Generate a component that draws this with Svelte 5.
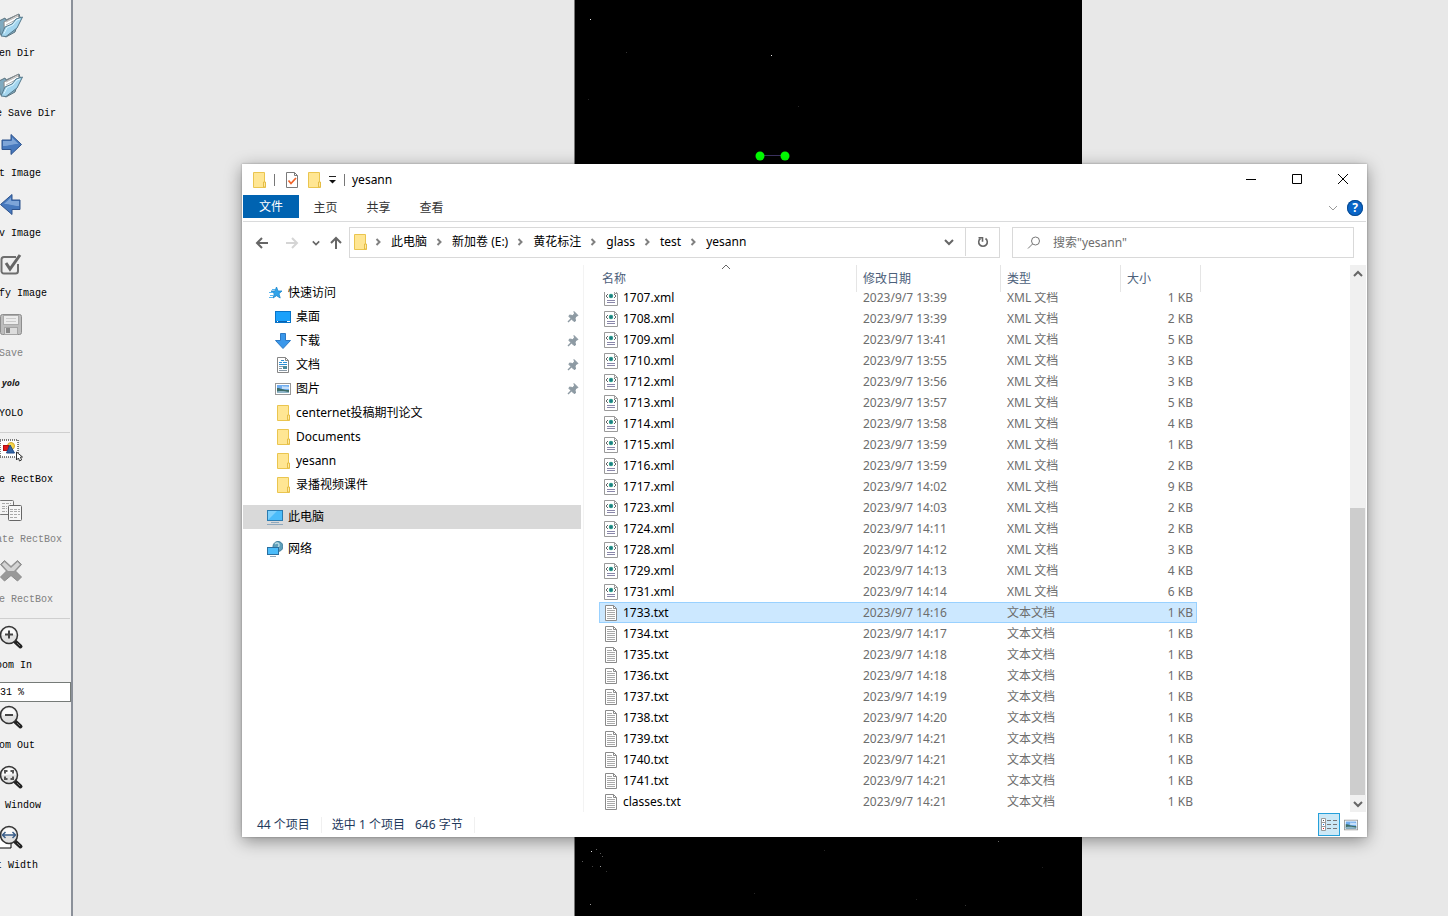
<script>
  const groups = [
    [
      { icon: 'dir', label: 'Open Dir' },
      { icon: 'dir', label: 'Change Save Dir' },
      { icon: 'next', label: 'Next Image' },
      { icon: 'prev', label: 'Prev Image' },
      { icon: 'verify', label: 'Verify Image' },
      { icon: 'save', label: 'Save', disabled: true },
      { icon: 'yolo', label: 'YOLO' }
    ],
    [
      { icon: 'rect', label: 'Create RectBox' },
      { icon: 'copy', label: 'Duplicate RectBox', disabled: true },
      { icon: 'delete', label: 'Delete RectBox', disabled: true }
    ]
  ];
  const zoomIn = { icon: 'zoomin', label: 'Zoom In' };
  const zoomRest = [
    { icon: 'zoomout', label: 'Zoom Out' },
    { icon: 'fitwin', label: 'Fit Window' },
    { icon: 'fitwidth', label: 'Fit Width' }
  ];

  const specks = [
    [15, 19, 0.9], [196, 55, 0.9], [51, 52, 0.2], [13, 99, 0.15], [223, 106, 0.15],
    [16, 851, 0.9], [21, 849, 0.4], [25, 853, 0.35], [27, 856, 0.35], [7, 861, 0.35],
    [25, 866, 0.6], [17, 866, 0.25], [31, 871, 0.2], [15, 904, 0.6], [423, 841, 0.5],
    [249, 850, 0.15], [341, 899, 0.15], [179, 893, 0.15], [390, 905, 0.2], [467, 867, 0.12]
  ];

  const quick = [
    { icon: 'desktop', label: '桌面', pin: true },
    { icon: 'download', label: '下载', pin: true },
    { icon: 'doc', label: '文档', pin: true },
    { icon: 'picture', label: '图片', pin: true },
    { icon: 'folder', label: 'centernet投稿期刊论文' },
    { icon: 'folder', label: 'Documents' },
    { icon: 'folder', label: 'yesann' },
    { icon: 'folder', label: '录播视频课件' }
  ];

  const crumbs = ['此电脑', '新加卷 (E:)', '黄花标注', 'glass', 'test', 'yesann'];

  const files = [
    ['1707.xml', '13:39', 1], ['1708.xml', '13:39', 2], ['1709.xml', '13:41', 5],
    ['1710.xml', '13:55', 3], ['1712.xml', '13:56', 3], ['1713.xml', '13:57', 5],
    ['1714.xml', '13:58', 4], ['1715.xml', '13:59', 1], ['1716.xml', '13:59', 2],
    ['1717.xml', '14:02', 9], ['1723.xml', '14:03', 2], ['1724.xml', '14:11', 2],
    ['1728.xml', '14:12', 3], ['1729.xml', '14:13', 4], ['1731.xml', '14:14', 6],
    ['1733.txt', '14:16', 1], ['1734.txt', '14:17', 1], ['1735.txt', '14:18', 1],
    ['1736.txt', '14:18', 1], ['1737.txt', '14:19', 1], ['1738.txt', '14:20', 1],
    ['1739.txt', '14:21', 1], ['1740.txt', '14:21', 1], ['1741.txt', '14:21', 1],
    ['classes.txt', '14:21', 1]
  ];
  let selected = $state('1733.txt');
  let zoom = $state('31 %');
</script>

{#snippet lens()}
  <path d="M15.5 16l6 5.5" stroke="#222" stroke-width="4" stroke-linecap="round" />
  <path d="M18 18l3 3" stroke="#777" stroke-width="1" />
  <circle cx="10" cy="10" r="8.5" fill="#e2e2e2" stroke="#333" stroke-width="1.5" />
  <path d="M3 10a7 7 0 0 1 14 0c-5-2-9 1-14 0z" fill="#fafafa" />
{/snippet}

{#snippet toolIcon(name)}
  <svg class="tool-icon" viewBox="0 0 24 24" fill="none" aria-hidden="true">
    {#if name === 'dir'}
      <path d="M0 8l6-3 1 2 13-6 1 3-5 15-9 5-6-3z" fill="#7fa9bf" stroke="#5d7480" />
      <path d="M5 9l14-7.500 1.500 4.500-9 13-6 3z" fill="#fff" stroke="#8a8a8a" />
      <path d="M7 9l12-6M7 12l13-7" stroke="#b5b5b5" />
      <path d="M2 23l4-9 7-3 4-5 6.500-2-5.500 11-11 8.500z" fill="#a4d6ef" stroke="#56798b" />
      <path d="M5 20.500l3-6 6-2.500 4-5 3-1" stroke="#dcf3fc" />
    {:else if name === 'next'}
      <path d="M3 7h9V1.500l10.500 10L12 21.500v-5H3z" fill="#4779be" stroke="#2d528c" />
      <path d="M4 8h9V4.500l6.500 6.500c-7 0-9 2-15.500 2z" fill="#7ea5d8" />
    {:else if name === 'prev'}
      <path d="M21 7h-8V1.500L1.500 11.500l11.500 10v-5h8z" fill="#4779be" stroke="#2d528c" />
      <path d="M20 8h-8V4.500L5 11c7 0 9 2 15 2z" fill="#7ea5d8" />
    {:else if name === 'verify'}
      <path d="M17 4H5a2.500 2.500 0 0 0-2.500 2.500v11A2.500 2.500 0 0 0 5 20.500h11.500a2.500 2.500 0 0 0 2.500-2.500v-7" stroke="#6e6e6e" stroke-width="2" />
      <path d="M7 10l4 6L21 2" stroke="#666" stroke-width="3" />
    {:else if name === 'save'}
      <rect x="1.500" y="1.500" width="21" height="20" rx="2" fill="#bdbdbd" stroke="#8e8e8e" />
      <rect x="4.500" y="2.500" width="15" height="9" fill="#ececec" stroke="#aaa" />
      <path d="M7 5.500h10M7 8.500h10" stroke="#ccc" />
      <rect x="5.500" y="14.500" width="13" height="7" fill="#ddd" stroke="#a5a5a5" />
      <rect x="7" y="15" width="4" height="5" fill="#888" />
    {:else if name === 'yolo'}
      <text x="3" y="13" font-family="Open Sans, sans-serif" font-size="9" font-weight="700" font-style="italic" fill="#222">yolo</text>
    {:else if name === 'rect'}
      <rect x="1" y="1" width="18" height="17" fill="#fff" />
      <circle cx="12" cy="7" r="3.500" fill="#f7d74c" stroke="#d5a92c" />
      <rect x="4.500" y="6.500" width="5" height="5" fill="#e01b1b" stroke="#b01010" />
      <path d="M11 6l4.500 8h-8z" fill="#3465a4" stroke="#204a87" />
      <rect x="1" y="1" width="18" height="17" stroke="#000" stroke-dasharray="1 1" />
      <path d="M17.500 13v8l2-2 1 3 2-1-1-3h2z" fill="#fff" stroke="#333" />
    {:else if name === 'copy'}
      <rect x=".5" y="1.500" width="14" height="14" rx="1" fill="#f4f4f4" stroke="#747474" />
      <path d="M3 4.500h9M3 7.500h5M3 9.500h5M3 12.500h5" stroke="#aaa" stroke-dasharray="3 1" />
      <rect x="9.500" y="6.500" width="13" height="15" rx="1" fill="#f7f7f7" stroke="#666" />
      <path d="M11 10.500h10M11 12.500h10M11 15.500h10M11 18.500h7" stroke="#aaa" stroke-dasharray="3 1" />
    {:else if name === 'delete'}
      <path d="M1.500 5.500l4-4 6.500 6 6.500-6 4 4-6 6.500 6 6-4 4-6.500-5.500-6.500 5.500-4-4 6-6z" fill="#999" stroke="#8b8b8b" />
      <path d="M3 5.500l2.500-2.500 6.500 6 6.500-6L21 5.500 15 12H9z" fill="#d4d4d4" />
    {:else if name === 'zoomin'}
      {@render lens()}
      <path d="M6 9.500h8M10 5.500v8" stroke="#444" stroke-width="2" />
    {:else if name === 'zoomout'}
      {@render lens()}
      <path d="M6 10h8" stroke="#444" stroke-width="2" />
    {:else if name === 'fitwin'}
      {@render lens()}
      <path d="M6 8.500V6h2.500M11.500 6H14v2.500M14 11.500V14h-2.500M8.500 14H6v-2.500" stroke="#555" stroke-width="2" />
    {:else}
      <path d="M-2 12h14v11H-2z" fill="#fff" stroke="#000" />
      {@render lens()}
      <path d="M4 10h12M6.500 7l-3 3 3 3M13.500 7l3 3-3 3" stroke="#3b5f8a" stroke-width="1.500" />
    {/if}
  </svg>
{/snippet}

{#snippet tool(t)}
  <button class="tool" disabled={t.disabled}>
    {@render toolIcon(t.icon)}
    <span>{t.label}</span>
  </button>
{/snippet}

{#snippet icon(name)}
  <svg class="icon {name}" viewBox="0 0 16 16" fill="none" aria-hidden="true">
    {#if name === 'folder'}
      <path d="M2.500.500h11v10h1v5h-12z" fill="#ffe693" stroke="#eac54f" />
      <path d="M12.500 15v-5h2v5z" fill="#ffe9a2" stroke="#e5bd45" />
    {:else if name === 'star'}
      <path d="M9.500 2l1.500 4h4l-3 2.700 1.200 4.300-3.700-2.300L6 13l1.300-4.300L4 6h4z" fill="#2fa3ea" stroke="#1c86cd" stroke-width=".8" />
      <path d="M5 4.500h3M2 7.500h4M3 10.500h3M2 12.500h4" stroke="#59b6ee" />
    {:else if name === 'desktop'}
      <rect x=".5" y="2.500" width="15" height="11" fill="#1ba1fb" stroke="#0874c9" />
      <path d="M1 12.500h14" stroke="#0a62b0" />
      <path d="M2 12.500h1M12 12.500h3" stroke="#fff" />
    {:else if name === 'download'}
      <path d="M5.500.500h5v7h5L8 15.500.500 7.500h5z" fill="#3a97ea" stroke="#2c79c4" />
    {:else if name === 'doc'}
      <path d="M2.500.500h8l3 3v12h-11z" fill="#fff" stroke="#868686" />
      <path d="M10.500.500v3h3" stroke="#868686" />
      <path d="M6 3.500h3M4 5.500h3M8 5.500h4M4 7.500h8" stroke="#2d90d4" />
      <path d="M4 9.500h4M4 11.500h3M4 13.500h8" stroke="#8a9aa8" />
      <path d="M8 9h4v3H8z" fill="#4c8a9b" />
    {:else if name === 'picture'}
      <rect x=".5" y="2.500" width="15" height="11" fill="#fff" stroke="#989898" />
      <path d="M2 4h12v8H2z" fill="#72aef0" />
      <path d="M7 5c2 1 4 0 7 1v2H7z" fill="#c5dffa" />
      <path d="M2 7c4 0 5 2 12 2v3H2z" fill="#3e6d68" />
      <path d="M2 10.500c5-1 8 0 12 .5v1H2z" fill="#8fb6c9" />
    {:else if name === 'pc'}
      <rect x=".5" y="1.500" width="15" height="10" fill="#4bbcfa" stroke="#2b7bb0" />
      <path d="M1 11V2h9z" fill="#7dd0fc" />
      <path d="M4 13.500h8M0 15.500h16" stroke="#8fa8bd" />
    {:else if name === 'network'}
      <circle cx="11" cy="5.500" r="5" fill="#5e9fba" stroke="#3e7d9c" />
      <path d="M8 3c2-2 4-1 4 1s-2 2 0 4" stroke="#b7d9e3" stroke-width="1.500" />
      <rect x=".5" y="6.500" width="11" height="7" fill="#4bbcfa" stroke="#2b6f9f" />
      <path d="M3 15.500h6" stroke="#8fa8bd" />
    {:else if name === 'xml'}
      <path d="M1.500.500h10l3 3v12h-13z" fill="#fff" stroke="#9a9a9a" />
      <path d="M11.500.500v3h3" stroke="#9a9a9a" />
      <path d="M5 4L3 6l2 2M11 4l2 2-2 2" stroke="#666" />
      <circle cx="8" cy="6" r="2.200" fill="#2f9d8c" />
      <circle cx="8" cy="6" r="1" fill="#1d6f86" />
      <path d="M4 10.500h8M4 12.500h8" stroke="#8a87aa" />
    {:else if name === 'txt'}
      <path d="M2.500.500h8l3 3v12h-11z" fill="#fff" stroke="#8a8a8a" />
      <path d="M10.500.500v3h3" stroke="#8a8a8a" />
      <path d="M4 3.500h5M4 5.500h8M4 7.500h8M4 9.500h8M4 11.500h8M4 13.500h8" stroke="#a9a9a9" />
    {:else if name === 'check'}
      <path d="M2.500.500h8l3 3v12h-11z" fill="#fff" stroke="#7a7a7a" />
      <path d="M10.500.500v3h3" stroke="#7a7a7a" />
      <path d="M4.500 8.500l2.500 3 5-5.500" stroke="#f0642a" stroke-width="1.800" />
    {:else if name === 'pin'}
      <path d="M9 2.500L13 6.500 11.500 7l-1.500 2 .5 3-1.500.500L4 7.500l.500-1.500 3 .5 2-1.500z" fill="#8d9aa3" stroke="#8d9aa3" />
      <path d="M6.500 9.500L3 13" stroke="#8d9aa3" stroke-width="1.500" />
    {/if}
  </svg>
{/snippet}

{#snippet chevron(dir, cls)}
  <svg class="chev {cls}" viewBox="0 0 10 10" fill="none" aria-hidden="true">
    {#if dir === 'down'}
      <path d="M1 3l4 4 4-4" stroke="currentColor" />
    {:else if dir === 'up'}
      <path d="M1 7l4-4 4 4" stroke="currentColor" />
    {:else}
      <path d="M3.500 2l3 3-3 3" stroke="currentColor" />
    {/if}
  </svg>
{/snippet}

<div class="app">
  <aside class="toolbar">
    {#each groups as group}
      {#each group as t}
        {@render tool(t)}
      {/each}
      <hr />
    {/each}
    {@render tool(zoomIn)}
    <input class="zoom" aria-label="Zoom" bind:value={zoom} />
    {#each zoomRest as t}
      {@render tool(t)}
    {/each}
  </aside>

  <main class="canvas">
    <div class="photo">
      {#each specks as [x, y, o]}
        <i style="left:{x}px;top:{y}px;opacity:{o}"></i>
      {/each}
      <svg class="shape" viewBox="0 0 36 12" aria-hidden="true">
        <path d="M6 5.500h25" stroke="#3c3360" />
        <circle cx="6" cy="6" r="4.500" fill="#0f0" />
        <circle cx="31" cy="6" r="4.500" fill="#0f0" />
      </svg>
    </div>
  </main>

  <section class="window" aria-label="yesann">
    <header class="title">
      {@render icon('folder')}
      <span class="bar first"></span>
      <button aria-label="属性">{@render icon('check')}</button>
      <button aria-label="新建文件夹">{@render icon('folder')}</button>
      <button class="more" aria-label="自定义">
        <svg viewBox="0 0 8 8"><path d="M1 .500h7" stroke="#222" /><path d="M1 4h7L4.500 7.500z" fill="#111" /></svg>
      </button>
      <span class="bar"></span>
      <h1>yesann</h1>
      <div class="controls">
        <button aria-label="最小化"><svg viewBox="0 0 10 10"><path d="M0 5.500h10" stroke="#000" /></svg></button>
        <button aria-label="最大化"><svg viewBox="0 0 10 10"><path d="M.500.500h9v9h-9z" stroke="#000" fill="none" /></svg></button>
        <button aria-label="关闭"><svg viewBox="0 0 10 10"><path d="M0 0l10 10M10 0L0 10" stroke="#000" /></svg></button>
      </div>
    </header>

    <nav class="tabs">
      <button class="file">文件</button>
      <button>主页</button>
      <button>共享</button>
      <button>查看</button>
      <div class="help">
        <button aria-label="展开功能区">{@render chevron('down', 'pale')}</button>
        <button class="round" aria-label="帮助">?</button>
      </div>
    </nav>

    <div class="nav-row">
      <button aria-label="后退"><svg class="arrow" viewBox="0 0 14 14"><path d="M13 7H2M7 2L2 7l5 5" /></svg></button>
      <button aria-label="前进" disabled><svg class="arrow" viewBox="0 0 14 14"><path d="M1 7h11M7 2l5 5-5 5" /></svg></button>
      <button class="small" aria-label="历史">{@render chevron('down', 'tiny')}</button>
      <button class="up" aria-label="上移"><svg class="arrow" viewBox="0 0 14 14"><path d="M7 13V2M2 7l5-5 5 5" /></svg></button>
      <div class="address">
        {@render icon('folder')}
        {#each crumbs as c}
          {@render chevron('right', 'sep')}
          <a href="#{c}">{c}</a>
        {/each}
        <button class="drop" aria-label="展开">{@render chevron('down', 'thick')}</button>
        <button class="refresh" aria-label="刷新">
          <svg viewBox="0 0 12 12" fill="none"><path d="M8.500 2.500A4.300 4.300 0 1 1 3.500 2.500" stroke="#666" stroke-width="1.600" /><path d="M1.500 1.800h4v4" stroke="#666" stroke-width="1.600" /></svg>
        </button>
      </div>
      <label class="search">
        <svg viewBox="0 0 14 14" fill="none" aria-hidden="true"><circle cx="8.500" cy="5" r="4" stroke="#777" /><path d="M5.500 8L1 12.500" stroke="#777" /></svg>
        <input aria-label="搜索" placeholder={'搜索"yesann"'} />
      </label>
    </div>

    <div class="body">
      <nav class="tree">
        <a href="#quick" class="root">{@render icon('star')}<span>快速访问</span></a>
        {#each quick as q}
          <a href="#{q.label}">{@render icon(q.icon)}<span>{q.label}</span>{#if q.pin}{@render icon('pin')}{/if}</a>
        {/each}
        <a href="#pc" class="root top current">{@render icon('pc')}<span>此电脑</span></a>
        <a href="#network" class="root top">{@render icon('network')}<span>网络</span></a>
      </nav>

      <div class="list">
        <span class="sort">{@render chevron('up', 'flat')}</span>
        <table>
          <colgroup><col class="c-name" /><col class="c-date" /><col class="c-type" /><col class="c-size" /></colgroup>
          <thead>
            <tr>
              <th><div>名称</div></th>
              <th><div>修改日期</div></th>
              <th><div>类型</div></th>
              <th><div class="last">大小</div></th>
            </tr>
          </thead>
          <tbody>
            {#each files as [name, time, size]}
              <tr class:selected={selected === name} onclick={() => (selected = name)}>
                <td><div class="name">{@render icon(name.endsWith('xml') ? 'xml' : 'txt')}{name}</div></td>
                <td>2023/9/7 {time}</td>
                <td>{name.endsWith('xml') ? 'XML 文档' : '文本文档'}</td>
                <td class="num">{size} KB</td>
              </tr>
            {/each}
          </tbody>
        </table>
      </div>

      <div class="scroll">
        <button aria-label="向上滚动">{@render chevron('up', 'thick')}</button>
        <div class="track"><div class="thumb"></div></div>
        <button aria-label="向下滚动">{@render chevron('down', 'thick')}</button>
      </div>
    </div>

    <footer class="status">
      <span class="cell">44 个项目</span>
      <span class="cell wide"><span>选中 1 个项目</span><span>646 字节</span></span>
      <div class="views">
        <button class="on" aria-label="详细信息">
          <svg viewBox="0 0 16 14" fill="none">
            <path d="M.500.500h4v12h-4zM.500 4.500h4M.500 8.500h4" fill="#fff" stroke="#999" />
            <path d="M2 2.500h1" stroke="#555" /><path d="M2 6.500h1" stroke="#1a7be0" /><path d="M2 10.500h1" stroke="#e02020" />
            <path d="M6 2.500h4M12 2.500h4M6 6.500h4M12 6.500h4M6 10.500h4M12 10.500h4" stroke="#777" />
          </svg>
        </button>
        <button aria-label="大缩略图">{@render icon('picture')}</button>
      </div>
    </footer>
  </section>
</div>

<style>
  :global(body) {
    margin: 0;
    background: #e8e8e8;
  }
  .app {
    position: relative;
    display: flex;
    height: 100vh;
    overflow: hidden;
    font: 12px/16px "Noto Sans", "Noto Sans CJK SC", sans-serif;
    color: #000;
  }
  button,
  input {
    font: inherit;
    color: inherit;
    border: 0;
    padding: 0;
    background: none;
  }
  button {
    display: flex;
    align-items: center;
    justify-content: center;
  }
  a {
    color: inherit;
    text-decoration: none;
  }
  svg {
    display: block;
    flex: none;
  }

  .toolbar {
    box-sizing: border-box;
    flex: none;
    display: flex;
    flex-direction: column;
    width: 122px;
    margin-left: -49px;
    padding-top: 3px;
    background: #f0f0f0;
    border-right: 2px solid #8b9099;
    font: 10px/14px "Liberation Mono", monospace;
  }
  .tool {
    flex: none;
    flex-direction: column;
    justify-content: flex-start;
    gap: 10px;
    height: 60px;
    padding-top: 10px;
    white-space: nowrap;
  }
  .tool:disabled {
    color: #808080;
  }
  .tool-icon {
    width: 24px;
    height: 24px;
    overflow: visible;
  }
  hr {
    flex: none;
    width: 119px;
    height: 1px;
    margin: 9px 0 -4px;
    border: 0;
    background: #cfcfcf;
  }
  .zoom {
    box-sizing: border-box;
    height: 20px;
    margin: 7px 0 -7px;
    padding-left: 48px;
    background: #fff;
    border: 1px solid #767b78;
  }

  .canvas {
    position: relative;
    flex: 1;
    background: #e8e8e8;
  }
  .photo {
    position: absolute;
    left: 501px;
    top: 0;
    bottom: 0;
    width: 507px;
    background: #000;
    border-left: 1px solid #777;
  }
  .photo i {
    position: absolute;
    width: 1px;
    height: 1px;
    background: #fff;
  }
  .shape {
    position: absolute;
    left: 179px;
    top: 150px;
    width: 36px;
    height: 12px;
  }

  .window {
    position: absolute;
    left: 242px;
    right: 81px;
    top: 164px;
    background: #fff;
    box-shadow: 0 4px 16px rgba(0, 0, 0, 0.4), 0 0 2px rgba(0, 0, 0, 0.3);
  }
  .icon {
    width: 16px;
    height: 16px;
  }
  .chev {
    width: 10px;
    height: 10px;
    color: #666;
  }
  .pale {
    color: #999;
  }
  .tiny {
    width: 8px;
    height: 8px;
  }
  .tiny path,
  .thick path,
  .sep path {
    stroke-width: 2;
  }
  .sep {
    color: #808080;
  }

  .title {
    display: flex;
    align-items: center;
    height: 31px;
    padding-left: 9px;
  }
  .bar {
    width: 1px;
    height: 12px;
    background: #777;
    margin: 0 7px 0 8px;
  }
  .bar.first {
    margin: 0 9px 0 7px;
  }
  .title > button + button {
    margin-left: 6px;
  }
  .more svg {
    width: 8px;
    height: 8px;
  }
  h1 {
    margin: 0;
    font: inherit;
  }
  .controls {
    display: flex;
    margin-left: auto;
    padding-right: 1px;
    align-self: stretch;
  }
  .controls button {
    width: 46px;
    height: 30px;
  }
  .controls svg {
    width: 10px;
    height: 10px;
    overflow: visible;
  }

  .tabs {
    display: flex;
    height: 26px;
    margin: 0 1px;
    border-bottom: 1px solid #dadbdc;
    color: #333;
  }
  .tabs > button {
    width: 53px;
    height: 26px;
  }
  .tabs > .file {
    width: 56px;
    height: 23px;
    background: #0063b1;
    color: #fff;
  }
  .help {
    display: flex;
    align-items: center;
    gap: 9px;
    margin-left: auto;
    padding-right: 3px;
  }
  .help .round {
    width: 16px;
    height: 16px;
    border-radius: 50%;
    background: #0a66c8;
    box-shadow: inset 0 0 0 1px #0b4a8f;
    color: #fff;
    font-weight: 700;
  }

  .nav-row {
    display: flex;
    align-items: center;
    height: 31px;
    padding: 5px 13px 7px;
  }
  .nav-row > button {
    width: 14px;
    margin-right: 16px;
  }
  .nav-row > button.small {
    width: 8px;
    margin: 0 9px 0 -3px;
  }
  .nav-row > button.up {
    margin-right: 6px;
  }
  .arrow {
    width: 14px;
    height: 14px;
    fill: none;
    stroke: #666;
    stroke-width: 2;
  }
  button:disabled .arrow {
    stroke: #d5d5d5;
  }
  .address {
    box-sizing: border-box;
    flex: 1;
    display: flex;
    align-items: center;
    height: 31px;
    padding: 0 0 1px 2px;
    border: 1px solid #d9d9d9;
    white-space: nowrap;
  }
  .address .folder {
    margin-right: -2px;
  }
  .address .sep {
    margin: 0 8px 0 7px;
  }
  .drop {
    align-self: stretch;
    width: 32px;
    margin-left: auto;
  }
  .refresh {
    align-self: stretch;
    width: 34px;
    border-left: 1px solid #d9d9d9;
  }
  .refresh svg {
    width: 12px;
    height: 12px;
  }
  .search {
    box-sizing: border-box;
    flex: 0 1 342px;
    display: flex;
    align-items: center;
    gap: 12px;
    height: 31px;
    margin-left: 12px;
    padding-left: 14px;
    border: 1px solid #d9d9d9;
  }
  .search svg {
    width: 14px;
    height: 14px;
  }
  .search input {
    flex: 1;
    min-width: 0;
  }
  .search input::placeholder {
    color: #6d6d6d;
  }

  .body {
    display: flex;
    padding-right: 1px;
  }
  .tree {
    box-sizing: border-box;
    flex: none;
    width: 342px;
    padding: 16px 2px 0 1px;
    border-right: 1px solid #f3f3f3;
  }
  .tree a {
    display: flex;
    align-items: center;
    gap: 5px;
    height: 24px;
    padding: 0 0 0 32px;
  }
  .tree a.root {
    padding-left: 24px;
  }
  .tree a.top {
    margin-top: 8px;
  }
  .tree a span {
    flex: 1;
  }
  .tree .current {
    background: #d9d9d9;
  }

  .list {
    position: relative;
    flex: 1;
    padding-left: 15px;
  }
  .sort {
    position: absolute;
    left: 137px;
    top: -3px;
    z-index: 2;
  }
  table {
    width: 598px;
    table-layout: fixed;
    border-collapse: collapse;
  }
  .c-name {
    width: 258px;
  }
  .c-date {
    width: 144px;
  }
  .c-type {
    width: 120px;
  }
  .c-size {
    width: 76px;
  }
  th {
    height: 22px;
    padding: 0;
    font-weight: 400;
    text-align: left;
    color: #4c607a;
  }
  th div {
    position: relative;
    z-index: 1;
    box-sizing: border-box;
    height: 27px;
    margin-bottom: -5px;
    padding: 6px 0 0 6px;
    background: #fff;
    border-right: 1px solid #e5e5e5;
  }
  th:first-child div {
    padding-left: 3px;
  }
  th .last {
    margin-right: -4px;
  }
  td {
    height: 21px;
    padding: 0 0 0 6px;
    line-height: 20px;
    color: #6d6d6d;
    white-space: nowrap;
  }
  td:first-child {
    padding-left: 4px;
    color: #000;
  }
  .name {
    display: flex;
    align-items: center;
    gap: 4px;
  }
  td.num {
    padding-right: 4px;
    text-align: right;
  }
  .selected {
    background: #cce8ff;
    outline: 1px solid #99d1ff;
    outline-offset: -1px;
  }

  .scroll {
    flex: none;
    display: flex;
    flex-direction: column;
    width: 16px;
    background: #f0f0f0;
  }
  .scroll button {
    height: 17px;
  }
  .track {
    flex: 1;
    display: flex;
    flex-direction: column;
    justify-content: flex-end;
  }
  .thumb {
    height: 56%;
    width: 15px;
    background: #cdcdcd;
  }

  .status {
    display: flex;
    align-items: center;
    height: 25px;
    padding-left: 15px;
    color: #1e395b;
  }
  .cell {
    padding-right: 11px;
    margin-right: 10px;
    border-right: 1px solid #f0f0f0;
  }
  .wide {
    display: flex;
    gap: 10px;
  }
  .views {
    display: flex;
    margin-left: auto;
    padding-right: 5px;
  }
  .views button {
    box-sizing: border-box;
    width: 22px;
    height: 23px;
  }
  .views .on {
    background: #cce8f6;
    border: 1px solid #26a0da;
  }
  .views svg {
    width: 16px;
    height: 14px;
  }
</style>
